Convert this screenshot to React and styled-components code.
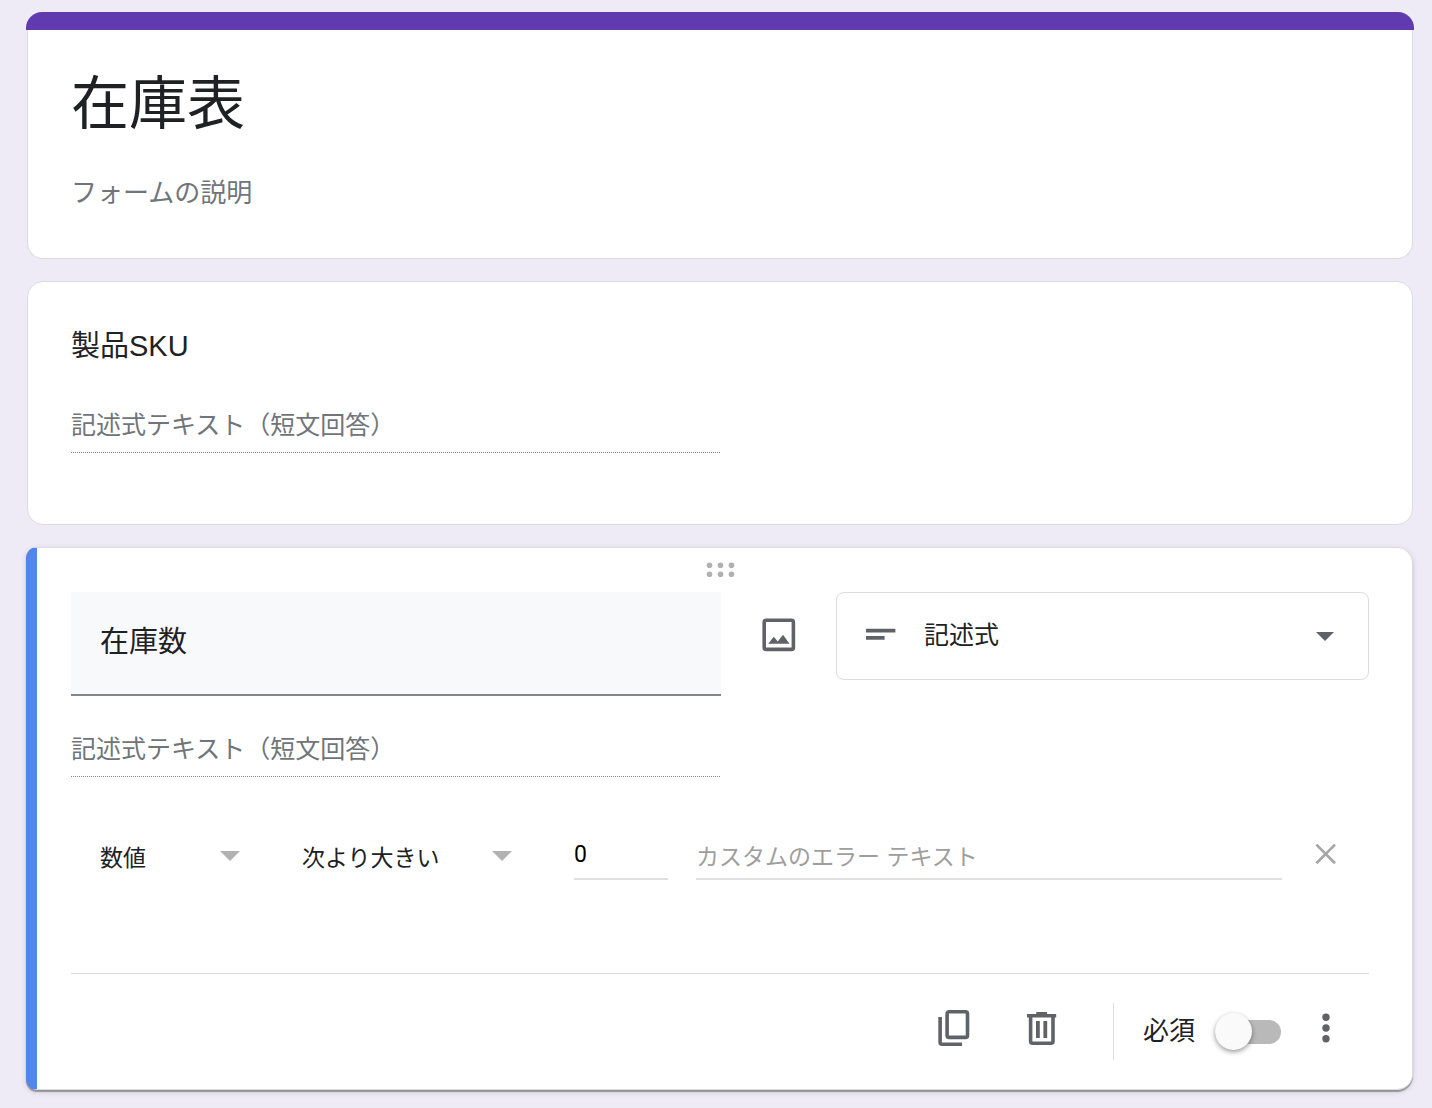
import { useState } from "react";
import styled, { createGlobalStyle } from "styled-components";

const GlobalStyle = createGlobalStyle`
    * {
        box-sizing: border-box;
    }
    body {
        margin: 0;
        background-color: #eeebf6;
        color: #202124;
        font-family: "Liberation Sans", "Noto Sans CJK JP", sans-serif;
    }
    input, select, button {
        margin: 0;
        padding: 0;
        border: none;
        border-radius: 0;
        background: none;
        color: inherit;
        font-family: inherit;
    }
    input:focus, select:focus {
        outline: none;
    }
`

const Page = styled.main`
    display: flex;
    flex-direction: column;
    gap: 22px;
    padding: 12px 18px 16px 26px;
`

const Strip = styled.div`
    height: 18px;
    border-radius: 16px 16px 0 0;
    background-color: #603bb0;
`

const HeaderCard = styled.header`
    margin: 0 1px;
    padding: 32px 43px 45px;
    border: 1px solid #dadce0;
    border-top: none;
    border-radius: 0 0 16px 16px;
    background-color: white;
`

const Title = styled.h1`
    margin: 0 0 27px;
    font-size: 58px;
    font-weight: 400;
    line-height: 84px;
`

const Description = styled.input`
    display: block;
    width: 100%;
    height: 40px;
    font-size: 26px;
    &::placeholder {
        color: #70757a;
        opacity: 1;
    }
`

const Card = styled.section`
    margin: 0 1px;
    padding: 46px 43px 71px;
    border: 1px solid #dadce0;
    border-radius: 16px;
    background-color: white;
`

const QuestionTitle = styled.h2`
    margin: 0 0 37px;
    font-size: 29px;
    font-weight: 400;
    line-height: 36px;
`

const ShortAnswer = styled.input`
    display: block;
    width: 50%;
    height: 52px;
    padding-bottom: 3px;
    border-bottom: 1px dotted #80868b;
    font-size: 25px;
    &::placeholder {
        color: #70757a;
        opacity: 1;
    }
`

const ActiveCard = styled.section`
    margin-right: 1px;
    padding: 0 43px 0 34px;
    border: 1px solid #dadce0;
    border-left: 11px solid #5286ec;
    border-radius: 11px 16px 16px 11px;
    background-color: white;
    box-shadow: 0 2px 1px 0 rgba(0, 0, 0, 0.32), 0 2px 6px 0 rgba(0, 0, 0, 0.12);
`

const DragHandle = styled.div`
    display: flex;
    justify-content: center;
    align-items: center;
    height: 44px;
`

const QuestionRow = styled.div`
    display: grid;
    grid-template-columns: 650fr 115px 533fr;
    align-items: start;
    margin-bottom: 29px;
`

const QuestionInput = styled.input`
    width: 100%;
    height: 104px;
    padding: 0 29px 8px;
    border-bottom: 2px solid #80868b;
    background-color: #f8f9fb;
    font-size: 29px;
`

const IconButton = styled.button`
    display: flex;
    justify-content: center;
    align-items: center;
    flex: none;
    width: ${(props) => props.$width || 88}px;
    height: 88px;
    padding-bottom: ${(props) => props.$lift || 0}px;
    color: #5f6368;
    cursor: pointer;
`

const TypeBox = styled.div`
    display: grid;
    align-items: center;
    height: 88px;
    border: 1px solid #dadce0;
    border-radius: 8px;
    color: #5f6368;
    > * {
        grid-area: 1 / 1;
    }
    > svg {
        pointer-events: none;
        margin: 0 29px;
    }
    > svg:last-child {
        justify-self: end;
        margin-right: 34px;
    }
`

const TypeSelect = styled.select`
    appearance: none;
    width: 100%;
    height: 86px;
    padding: 0 80px 2px 87px;
    color: #202124;
    font-size: 25px;
`

const Validation = styled.div`
    display: flex;
    align-items: center;
    height: 44px;
    margin: 59px 0 93px 29px;
`

const RuleBox = styled.div`
    display: grid;
    align-items: center;
    flex: none;
    width: ${(props) => props.$width}px;
    margin-right: 62px;
    color: #b2b2b2;
    > * {
        grid-area: 1 / 1;
    }
    > svg {
        pointer-events: none;
        justify-self: end;
        margin-bottom: 4px;
    }
`

const RuleSelect = styled.select`
    appearance: none;
    width: 100%;
    height: 44px;
    color: #202124;
    font-size: 23px;
`

const RuleInput = styled.input`
    height: 44px;
    border-bottom: 2px solid #e0e0e0;
    font-size: 23px;
    &::placeholder {
        color: #9e9e9e;
        opacity: 1;
    }
`

const NumberInput = styled(RuleInput)`
    flex: none;
    width: 94px;
    margin-right: 28px;
    padding-bottom: 6px;
    color: black;
    font-family: Roboto, sans-serif;
`

const ErrorInput = styled(RuleInput)`
    flex: 1;
    min-width: 0;
`

const Footer = styled.footer`
    display: flex;
    justify-content: flex-end;
    align-items: center;
    height: 116px;
    border-top: 1px solid #dadce0;
`

const Separator = styled.div`
    width: 1px;
    height: 57px;
    margin: 0 29px 0 27px;
    background-color: #dadce0;
`

const RequiredLabel = styled.label`
    margin-right: 20px;
    padding-bottom: 2px;
    font-size: 26px;
    line-height: 36px;
`

const Toggle = styled.input`
    appearance: none;
    display: flex;
    align-items: center;
    flex: none;
    width: 66px;
    height: 24px;
    margin-right: 1px;
    border-radius: 12px;
    background-color: #b9b9b9;
    cursor: pointer;
    &::before {
        content: "";
        width: 37px;
        height: 37px;
        border-radius: 50%;
        background-color: #fafafa;
        box-shadow: 0 2px 5px rgba(0, 0, 0, 0.4);
    }
    &:checked {
        justify-content: flex-end;
        background-color: #a78fd6;
    }
`

function DragDots() {
    return (
        <svg width="30" height="16" viewBox="0 0 30 16" fill="#b0b0b0">
            {[4.5, 15.5, 26.5].map((x) => (
                <g key={x}>
                    <circle cx={x} cy="3.3" r="2.8" />
                    <circle cx={x} cy="12.3" r="2.8" />
                </g>
            ))}
        </svg>
    )
}

function ImageIcon() {
    return (
        <svg width="44" height="44" viewBox="0 0 44 44">
            <rect x="7.2" y="7.2" width="29.2" height="29.2" rx="2" fill="none" stroke="currentColor" strokeWidth="3.6" />
            <path d="M11.2 30.8L16.8 23.8L20.8 28.4L26 21.8L32.5 30.8Z" fill="currentColor" />
        </svg>
    )
}

function ShortTextIcon() {
    return (
        <svg width="30" height="16" viewBox="0 0 30 16" fill="currentColor">
            <path d="M0 0.8H29.4V4.6H0ZM0 8H18.6V11.8H0Z" />
        </svg>
    )
}

function Arrow({ width }) {
    return (
        <svg width={width} height={width / 2} viewBox="0 0 20 10" fill="currentColor">
            <path d="M0 0H20L10 10Z" />
        </svg>
    )
}

function CloseIcon() {
    return (
        <svg width="22" height="22" viewBox="0 0 22 22" fill="none" stroke="#a6a6a6" strokeWidth="2.7">
            <path d="M1.4 1.6L20 20.2M20 1.6L1.4 20.2" />
        </svg>
    )
}

function CopyIcon() {
    return (
        <svg width="44" height="44" viewBox="0 0 44 44" fill="none" stroke="currentColor" strokeWidth="3.6">
            <rect x="15.1" y="5.8" width="20.4" height="25.6" rx="2" />
            <path d="M8.1 11V36.2A2 2 0 0 0 10.1 38.2H30" />
        </svg>
    )
}

function TrashIcon() {
    return (
        <svg width="44" height="44" viewBox="0 0 44 44">
            <path d="M10.6 10V35.2A2 2 0 0 0 12.6 37.2H31A2 2 0 0 0 33 35.2V10" fill="none" stroke="currentColor" strokeWidth="3.6" />
            <path d="M7 8H16.3V6H27V8H36.2V11.6H7ZM16 15H19.8V32H16ZM23.4 15H27.2V32H23.4Z" fill="currentColor" />
        </svg>
    )
}

function MoreIcon() {
    return (
        <svg width="10" height="32" viewBox="0 0 10 32" fill="currentColor">
            <circle cx="5" cy="5.2" r="3.7" />
            <circle cx="5" cy="16" r="3.7" />
            <circle cx="5" cy="26.8" r="3.7" />
        </svg>
    )
}

function Question() {
    const [name, setName] = useState("在庫数")
    const [value, setValue] = useState("0")
    const [required, setRequired] = useState(false)

    return (
        <ActiveCard>
            <DragHandle>
                <DragDots />
            </DragHandle>
            <QuestionRow>
                <QuestionInput aria-label="質問" value={name} onChange={(e) => setName(e.target.value)} />
                <IconButton $width={115} $lift={2} aria-label="画像を追加">
                    <ImageIcon />
                </IconButton>
                <TypeBox>
                    <TypeSelect aria-label="質問の種類">
                        <option>記述式</option>
                    </TypeSelect>
                    <ShortTextIcon />
                    <Arrow width={18} />
                </TypeBox>
            </QuestionRow>
            <ShortAnswer aria-label="回答" placeholder="記述式テキスト（短文回答）" disabled />
            <Validation>
                <RuleBox $width={140}>
                    <RuleSelect aria-label="検証の種類">
                        <option>数値</option>
                    </RuleSelect>
                    <Arrow width={20} />
                </RuleBox>
                <RuleBox $width={210}>
                    <RuleSelect aria-label="条件">
                        <option>次より大きい</option>
                    </RuleSelect>
                    <Arrow width={20} />
                </RuleBox>
                <NumberInput aria-label="数値" value={value} onChange={(e) => setValue(e.target.value)} />
                <ErrorInput aria-label="エラー テキスト" placeholder="カスタムのエラー テキスト" />
                <IconButton $width={87} $lift={8} aria-label="検証を削除">
                    <CloseIcon />
                </IconButton>
            </Validation>
            <Footer>
                <IconButton $lift={8} aria-label="コピーを作成">
                    <CopyIcon />
                </IconButton>
                <IconButton $lift={8} aria-label="削除">
                    <TrashIcon />
                </IconButton>
                <Separator />
                <RequiredLabel htmlFor="required">必須</RequiredLabel>
                <Toggle
                    id="required"
                    type="checkbox"
                    role="switch"
                    checked={required}
                    onChange={(e) => setRequired(e.target.checked)}
                />
                <IconButton $width={87} $lift={8} aria-label="その他">
                    <MoreIcon />
                </IconButton>
            </Footer>
        </ActiveCard>
    )
}

export default function App() {
    return (
        <>
            <GlobalStyle />
            <Page>
                <div>
                    <Strip />
                    <HeaderCard>
                        <Title>在庫表</Title>
                        <Description aria-label="フォームの説明" placeholder="フォームの説明" />
                    </HeaderCard>
                </div>
                <Card>
                    <QuestionTitle>製品SKU</QuestionTitle>
                    <ShortAnswer aria-label="製品SKU" placeholder="記述式テキスト（短文回答）" disabled />
                </Card>
                <Question />
            </Page>
        </>
    )
}
